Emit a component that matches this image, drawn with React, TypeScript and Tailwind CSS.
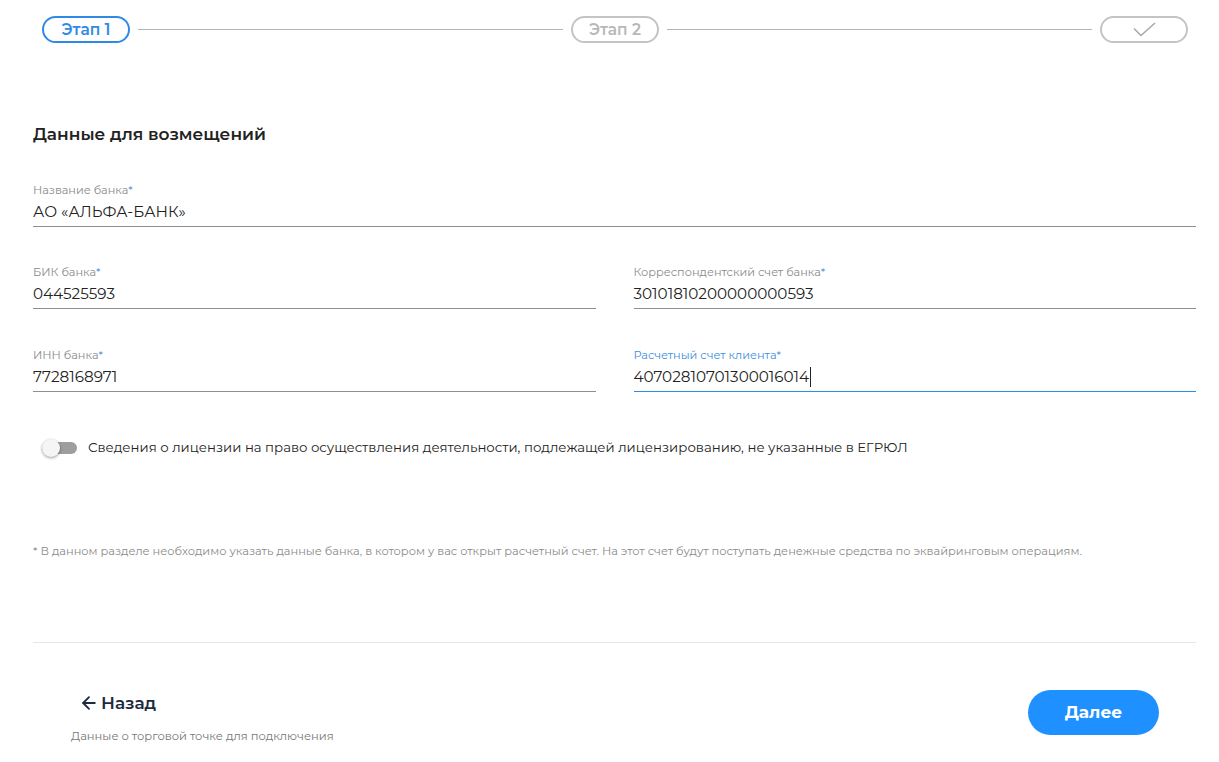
import { ArrowLeft } from "lucide-react";

const font = { fontFamily: "Montserrat, 'DejaVu Sans', sans-serif" };

function Field({
  label,
  value,
  active,
}: {
  label: string;
  value: string;
  active?: boolean;
}) {
  return (
    <div
      className={`flex flex-col border-b ${
        active ? "border-[#2a8ee6]" : "border-[#8f8f8f]"
      }`}
    >
      <label
        className={`text-[11.3px] leading-[16px] ${
          active ? "text-[#3d8fe0]" : "text-[#8a8a8a]"
        }`}
      >
        {label}
        <span className="text-[#3d8fe0]">*</span>
      </label>
      <div className="flex h-[28px] items-center text-[15.2px] text-[#222]">
        {value}
        {active && <span className="ml-px inline-block h-[20px] w-px bg-[#222]" />}
      </div>
    </div>
  );
}

export default function App() {
  return (
    <div className="min-h-[762px] bg-white" style={font}>
      {/* stepper */}
      <div className="flex items-center px-[42px] pt-[16px] pr-[31px]">
        <div className="flex h-[27px] w-[88px] items-center justify-center rounded-full border-2 border-[#2f8ae6] text-[15.5px] font-semibold text-[#2f8ae6]">
          Этап 1
        </div>
        <div className="mx-[8px] h-px flex-1 bg-[#b5b5b5]" />
        <div className="flex h-[27px] w-[88px] items-center justify-center rounded-full border-2 border-[#c4c4c4] text-[15.5px] font-semibold text-[#b8b8b8]">
          Этап 2
        </div>
        <div className="mx-[8px] h-px flex-1 bg-[#b5b5b5]" />
        <div className="flex h-[27px] w-[88px] items-center justify-center rounded-full border-2 border-[#c4c4c4]">
          <svg width="23" height="15" viewBox="0 0 23 15" fill="none">
            <path d="M1 6.5 L8 13.5 L22 1" stroke="#a8a8a8" strokeWidth="1.6" />
          </svg>
        </div>
      </div>

      <div className="px-[33px] pr-[23px]">
        <h2 className="mt-[81px] text-[17px] font-semibold leading-[20px] text-[#222]">
          Данные для возмещений
        </h2>

        <div className="mt-[38px]">
          <Field label="Название банка" value="АО «АЛЬФА-БАНК»" />
        </div>

        <div className="mt-[37px] grid grid-cols-2 gap-x-[38px] gap-y-[38px]">
          <Field label="БИК банка" value="044525593" />
          <Field label="Корреспондентский счет банка" value="30101810200000000593" />
          <Field label="ИНН банка" value="7728168971" />
          <Field label="Расчетный счет клиента" value="40702810701300016014" active />
        </div>

        <div className="mt-[46px] flex items-center gap-[11px] pl-[9px]">
          <div className="relative flex h-[18px] w-[35px] items-center">
            <div className="h-[12px] w-full rounded-full bg-[#9e9e9e]" />
            <div className="absolute left-0 h-[18px] w-[18px] rounded-full bg-[#f5f5f5] shadow-[0_1px_3px_rgba(0,0,0,0.4)]" />
          </div>
          <span className="text-[13.3px] text-[#222]">
            Сведения о лицензии на право осуществления деятельности, подлежащей лицензированию, не указанные в ЕГРЮЛ
          </span>
        </div>

        <p className="mt-[85px] text-[11.4px] text-[#8a8a8a]">
          * В данном разделе необходимо указать данные банка, в котором у вас открыт расчетный счет. На этот счет будут поступать денежные средства по эквайринговым операциям.
        </p>

        <div className="mt-[82px] h-px bg-[#e6e6e6]" />

        <div className="mt-[47px] flex items-start justify-between pr-[37px]">
          <div className="flex flex-col pl-[38px] pt-[2px]">
            <button className="flex items-center gap-[2px] pl-[8px] text-[17px] font-semibold leading-[22px] text-[#1d2b40]">
              <ArrowLeft className="h-[20px] w-[20px]" strokeWidth={2.2} />
              Назад
            </button>
            <span className="mt-[14px] text-[11.5px] text-[#777]">
              Данные о торговой точке для подключения
            </span>
          </div>
          <button className="flex h-[45px] w-[131px] items-center justify-center rounded-full bg-[#1e90ff] text-[17px] font-bold text-white">
            Далее
          </button>
        </div>
      </div>
    </div>
  );
}
